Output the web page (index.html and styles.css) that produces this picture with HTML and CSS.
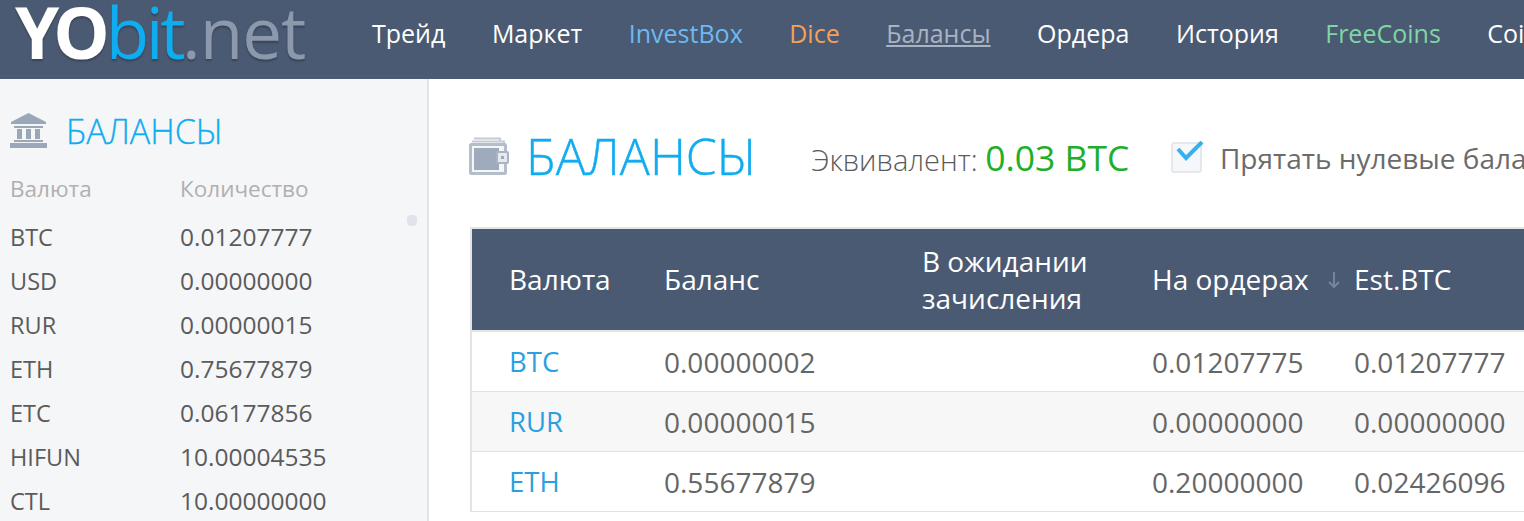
FILE: index.html
```html
<!DOCTYPE html>
<html lang="en">
<head>
    <meta charset="UTF-8">
    <title>YObit.net</title>
    <link rel="stylesheet" href="styles.css">
</head>
<body>
    <div class="header">
        <div class="logo"><span class="logo-yo">YO</span><span class="logo-bit">bit</span><span class="logo-net">.net</span></div>
        <div class="nav">
            <a>Трейд</a>
            <a>Маркет</a>
            <a class="blue">InvestBox</a>
            <a class="orange">Dice</a>
            <a class="current">Балансы</a>
            <a>Ордера</a>
            <a>История</a>
            <a class="green">FreeCoins</a>
            <a>CoinInfo</a>
        </div>
    </div>
    <div class="page">
        <div class="sidebar">
            <div class="side-title">
                <svg class="bank-icon" width="37" height="35" viewBox="0 0 37 35">
                    <path d="M18.500 0 L36 9 V11 H1 V9 Z" fill="#9aa7b9"/>
                    <path d="M4 13 H33 V15 H4 Z M7 16 H12 V26 H7 Z M16 16 H21 V26 H16 Z M25 16 H30 V26 H25 Z M4 27 H33 V29 H4 Z M0 30 H37 V35 H0 Z" fill="#9aa7b9"/>
                </svg>
                <span>БАЛАНСЫ</span>
            </div>
            <div class="side-row side-head"><span>Валюта</span><span>Количество</span></div>
            <div class="side-row"><span>BTC</span><span>0.01207777</span></div>
            <div class="side-row"><span>USD</span><span>0.00000000</span></div>
            <div class="side-row"><span>RUR</span><span>0.00000015</span></div>
            <div class="side-row"><span>ETH</span><span>0.75677879</span></div>
            <div class="side-row"><span>ETC</span><span>0.06177856</span></div>
            <div class="side-row"><span>HIFUN</span><span>10.00004535</span></div>
            <div class="side-row"><span>CTL</span><span>10.00000000</span></div>
            <div class="scroll-dot"></div>
        </div>
        <div class="main">
            <div class="title-row">
                <svg class="wallet-icon" width="40" height="38" viewBox="0 0 40 38">
                    <path d="M5 1.500 H31 V5 M3 4.500 H35 V9" fill="none" stroke="#c3cbd6" stroke-width="2"/>
                    <rect x="1.500" y="7.500" width="35" height="29" rx="1" fill="#f4f6f8" stroke="#b4bdca" stroke-width="3"/>
                    <rect x="5" y="11" width="25" height="22" fill="#9eabbd"/>
                    <rect x="28" y="15" width="11" height="11" rx="1" fill="#e6e9ee" stroke="#a9b4c4" stroke-width="2"/>
                    <rect x="32" y="19" width="3" height="3" fill="#9eabbd"/>
                </svg>
                <h1>БАЛАНСЫ</h1>
                <div class="equiv">Эквивалент: <span class="equiv-val">0.03 BTC</span></div>
                <div class="hide-zero">
                    <div class="checkbox">
                        <svg width="34" height="24" viewBox="0 0 34 24"><path d="M7 8 L15 17 L31 1" fill="none" stroke="#35b1f3" stroke-width="4"/></svg>
                    </div>
                    <span>Прятать нулевые балансы</span>
                </div>
            </div>
            <div class="table">
                <div class="row row-head">
                    <div>Валюта</div>
                    <div>Баланс</div>
                    <div>В ожидании<br>зачисления</div>
                    <div class="sort-cell">На ордерах<svg width="14" height="18" viewBox="0 0 14 18"><path d="M7 1 V16 M2 11 L7 16 L12 11" fill="none" stroke="#75859b" stroke-width="2"/></svg></div>
                    <div>Est.BTC</div>
                </div>
                <div class="row">
                    <div class="coin">BTC</div><div>0.00000002</div><div></div><div>0.01207775</div><div>0.01207777</div>
                </div>
                <div class="row alt">
                    <div class="coin">RUR</div><div>0.00000015</div><div></div><div>0.00000000</div><div>0.00000000</div>
                </div>
                <div class="row">
                    <div class="coin">ETH</div><div>0.55677879</div><div></div><div>0.20000000</div><div>0.02426096</div>
                </div>
            </div>
        </div>
    </div>
</body>
</html>
```

FILE: styles.css
```css
html, body {
    margin: 0;
    height: 521px;
    overflow: hidden;
    background-color: #fff;
    font-family: "Open Sans", "Noto Sans", sans-serif;
    color: #5b5b5b;
}
.header {
    height: 79px;
    background-color: #4a5a73;
    display: flex;
}
.logo {
    width: 372px;
    flex-shrink: 0;
    box-sizing: border-box;
    padding-left: 15px;
    font-size: 71px;
    line-height: 64px;
    text-shadow: 0 2px 2px rgba(0, 0, 0, 0.25);
    white-space: nowrap;
}
.logo-yo {
    color: #fff;
    font-weight: 700;
    letter-spacing: -6px;
}
.logo-bit {
    color: #10acf0;
    letter-spacing: -3.500px;
    margin-left: 2px;
}
.logo-net {
    color: #8c99ac;
    letter-spacing: -1px;
}
.nav {
    display: flex;
    gap: 46.500px;
    font-size: 25px;
    line-height: 66px;
    color: #fff;
    white-space: nowrap;
}
.nav .blue {
    color: #6db9f2;
}
.nav .orange {
    color: #f5a05a;
}
.nav .green {
    color: #7fd6a4;
}
.nav .current {
    color: #a9b3c2;
    text-decoration: underline;
}
.page {
    display: flex;
    height: 442px;
}
.sidebar {
    position: relative;
    box-sizing: border-box;
    width: 429px;
    flex-shrink: 0;
    padding-left: 10px;
    background-color: #f5f6f8;
    border-right: 2px solid #e4e4e4;
}
.side-title {
    display: flex;
    align-items: center;
    height: 35px;
    margin-top: 34px;
    font-size: 34px;
    font-weight: 300;
    -webkit-text-stroke: 0.3px #10acf0;
    color: #10acf0;
}
.bank-icon {
    flex-shrink: 0;
    margin-right: 19px;
}
.side-row {
    display: flex;
    height: 44px;
    line-height: 44px;
    font-size: 24.500px;
}
.side-row span:first-child {
    width: 170px;
    font-size: 23.500px;
}
.side-head {
    height: 46px;
    line-height: 39px;
    margin-top: 21px;
    color: #b0b0b0;
    font-size: 22.500px;
}
.side-head span:first-child {
    font-size: 22.500px;
}
.scroll-dot {
    position: absolute;
    left: 407px;
    top: 136px;
    width: 10px;
    height: 11px;
    border-radius: 4px;
    background-color: #e0e3e9;
}
.main {
    flex: 1;
    min-width: 0;
    padding-left: 41px;
    overflow: hidden;
}
.title-row {
    display: flex;
    align-items: center;
    height: 66px;
    margin-top: 44px;
    white-space: nowrap;
}
.wallet-icon {
    flex-shrink: 0;
    margin-left: -1px;
    margin-right: 17px;
}
.title-row h1 {
    margin: 0 54.500px 0 0;
    font-size: 50px;
    font-weight: 300;
    -webkit-text-stroke: 0.4px #10acf0;
    color: #10acf0;
}
.equiv {
    margin-top: 2px;
    margin-right: 41.500px;
    font-size: 29px;
    font-weight: 300;
}
.equiv-val {
    font-size: 35.500px;
    font-weight: 400;
    color: #1fae2a;
}
.hide-zero {
    display: flex;
    align-items: center;
    margin-top: 3px;
    font-size: 28px;
    color: #6b6b6b;
}
.checkbox {
    position: relative;
    box-sizing: border-box;
    flex-shrink: 0;
    width: 31px;
    height: 31px;
    margin-right: 18px;
    background-color: #f5f7fa;
    border: 2px solid #e4e7ec;
    border-radius: 3px;
}
.checkbox svg {
    position: absolute;
    left: -2px;
    top: -3px;
}
.table {
    width: 1200px;
    margin-top: 38px;
    border-top: 2px solid #e4e4e4;
    border-left: 2px solid #e4e4e4;
}
.row {
    display: grid;
    grid-template-columns: 155px 258px 230px 202px 1fr;
    align-items: center;
    box-sizing: border-box;
    height: 60px;
    padding-left: 37px;
    border-bottom: 1px solid #e2e2e2;
    font-size: 28px;
    color: #666;
}
.row-head {
    height: 103px;
    background-color: #4a5a73;
    color: #fff;
    line-height: 37px;
    border-bottom: 2px solid #e4e4e4;
}
.sort-cell {
    display: flex;
    align-items: center;
    gap: 18px;
}
.alt {
    background-color: #f7f7f7;
}
.coin {
    font-size: 27.500px;
    color: #2c9fe0;
}
```
